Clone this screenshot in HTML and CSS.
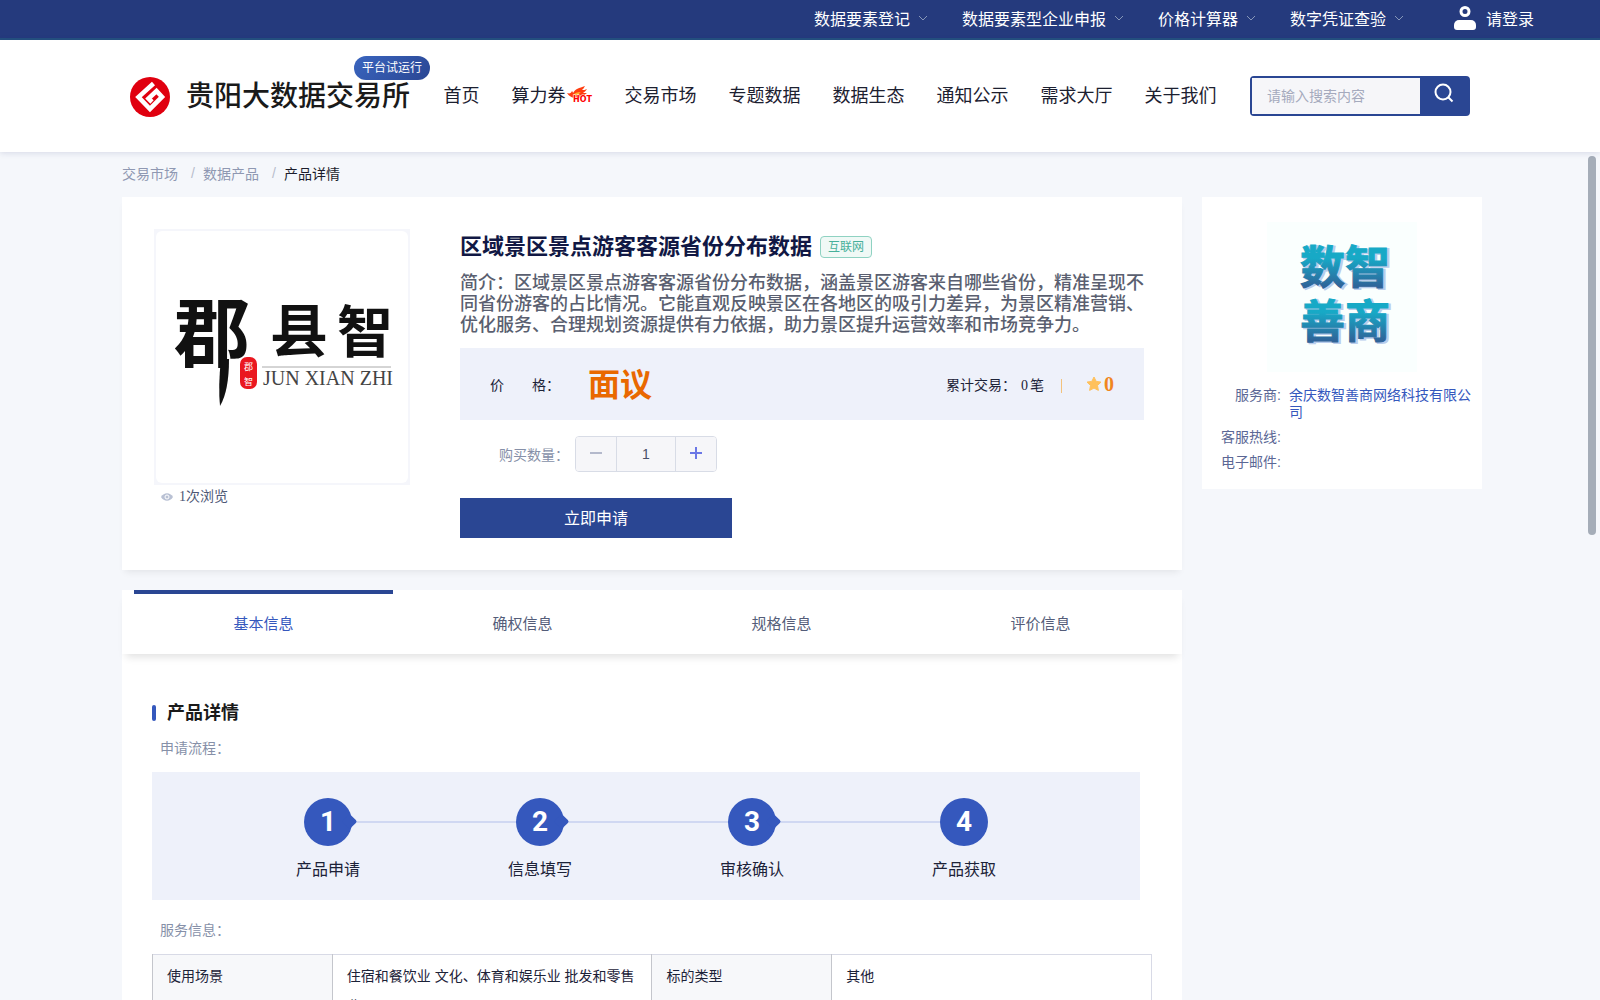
FILE: index.html
```html
<!DOCTYPE html>
<html lang="zh-CN">
<head>
    <meta charset="UTF-8">
    <meta name="viewport" content="width=device-width, initial-scale=1.0">
    <title>产品详情</title>
    <link rel="stylesheet" href="styles.css">
</head>
<body>
    <!-- Top bar -->
    <div class="topbar">
        <a class="top-link" href="#">数据要素登记<svg class="chevron" viewBox="0 0 10 6"><path d="M1 1l4 4 4-4"/></svg></a>
        <a class="top-link" href="#">数据要素型企业申报<svg class="chevron" viewBox="0 0 10 6"><path d="M1 1l4 4 4-4"/></svg></a>
        <a class="top-link" href="#">价格计算器<svg class="chevron" viewBox="0 0 10 6"><path d="M1 1l4 4 4-4"/></svg></a>
        <a class="top-link" href="#">数字凭证查验<svg class="chevron" viewBox="0 0 10 6"><path d="M1 1l4 4 4-4"/></svg></a>
        <a class="login" href="#">
            <svg class="user-icon" viewBox="0 0 22 24">
                <circle cx="11" cy="5.5" r="4" fill="none" stroke="#fff" stroke-width="3"/>
                <path d="M5 14h12a5 5 0 0 1 5 5v2a3 3 0 0 1-3 3H3a3 3 0 0 1-3-3v-2a5 5 0 0 1 5-5z" fill="#fff"/>
            </svg>
            请登录
        </a>
    </div>

    <!-- Header -->
    <header class="header">
        <a class="brand" href="#">
            <svg class="brand-mark" viewBox="0 0 40 40">
                <circle cx="20" cy="20" r="20" fill="#e0000f"/>
                <path d="M23.5 6.500L8.500 20 20 32 32 20 26.500 14 18.500 21.500 22 25" fill="none" stroke="#fff" stroke-width="4.600"/>
            </svg>
            <span class="brand-name">贵阳大数据交易所</span>
            <span class="trial-badge">平台试运行</span>
        </a>
        <nav class="nav">
            <a href="#">首页</a>
            <a class="nav-hot" href="#">算力券
                <svg class="hot-icon" viewBox="0 0 26 18">
                    <path d="M0 8c3 1 4 0 5-2 1 1 1 2 1 2 2-4 6-5 12-7-1 2-2 3-3 4 2 0 3 0 5-1-1 2-3 3-4 4h4c-3 2-5 4-8 5H7C4 12 2 11 0 8z" fill="#ff3d10"/>
                    <path d="M6 10c2-2 4-3 8-3-2 1-2 2-2 3H8z" fill="#ffb02e"/>
                    <text x="6" y="17">HOT</text>
                </svg>
            </a>
            <a href="#">交易市场</a>
            <a href="#">专题数据</a>
            <a href="#">数据生态</a>
            <a href="#">通知公示</a>
            <a href="#">需求大厅</a>
            <a href="#">关于我们</a>
        </nav>
        <form class="search">
            <input type="text" placeholder="请输入搜索内容" aria-label="搜索">
            <button type="button" aria-label="搜索按钮">
                <svg viewBox="0 0 20 20"><circle cx="9" cy="9" r="7.500"/><path d="M14.500 14.500l4 4"/></svg>
            </button>
        </form>
    </header>

    <div class="page">
        <nav class="breadcrumb">
            <a href="#">交易市场</a><span class="sep">/</span>
            <a href="#">数据产品</a><span class="sep">/</span>
            <span class="current">产品详情</span>
        </nav>

        <div class="layout">
            <main class="main">
                <!-- Product summary -->
                <section class="card product">
                    <div class="cover-col">
                        <div class="cover">
                            <svg viewBox="0 0 252 252" role="img" aria-label="郡县智">
                                <text class="brush" x="18" y="130" font-size="76">郡</text>
                                <path d="M65 128h8q0 32-9 47-2-20 1-47z" fill="#111"/>
                                <text class="brush" x="114" y="121" font-size="58">县</text>
                                <text class="brush" x="181" y="121" font-size="56">智</text>
                                <rect x="84" y="126" width="17" height="32" rx="7" fill="#ea1820"/>
                                <text class="seal" x="88" y="139">郡</text>
                                <text class="seal" x="88" y="154">智</text>
                                <path d="M106 136h129" stroke="#aaa"/>
                                <text class="pinyin" x="107" y="154">JUN XIAN ZHI</text>
                            </svg>
                        </div>
                        <div class="views">
                            <svg viewBox="0 0 12 8"><path d="M0 4c3-5 9-5 12 0-3 5-9 5-12 0z" fill="#b9c1d4"/><circle cx="6" cy="4" r="2" fill="none" stroke="#fff"/></svg>
                            1次浏览
                        </div>
                    </div>
                    <div class="info">
                        <div class="title-row">
                            <h1>区域景区景点游客客源省份分布数据</h1>
                            <span class="tag">互联网</span>
                        </div>
                        <p class="desc">简介：区域景区景点游客客源省份分布数据，涵盖景区游客来自哪些省份，精准呈现不同省份游客的占比情况。它能直观反映景区在各地区的吸引力差异，为景区精准营销、优化服务、合理规划资源提供有力依据，助力景区提升运营效率和市场竞争力。</p>
                        <div class="price-box">
                            <span class="price-label"><span>价</span><span>格：</span></span>
                            <strong class="price">面议</strong>
                            <span class="deals">累计交易：<span class="num">0</span>笔</span>
                            <span class="divider"></span>
                            <span class="stars">
                                <svg viewBox="0 0 16 16"><path d="M8 1l2.200 4.400 4.800.7-3.500 3.400.9 4.900L8 12.100l-4.400 2.300.9-4.900L1 6.100l4.800-.7z" fill="#ffc15c" stroke="#ffc15c" stroke-linejoin="round"/></svg>0
                            </span>
                        </div>
                        <div class="quantity">
                            <label for="qty">购买数量：</label>
                            <div class="stepper">
                                <button type="button" class="minus" aria-label="减少"><svg viewBox="0 0 12 12"><path d="M0 6h12"/></svg></button>
                                <input id="qty" type="text" value="1">
                                <button type="button" class="plus" aria-label="增加"><svg viewBox="0 0 12 12"><path d="M0 6h12M6 0v12"/></svg></button>
                            </div>
                        </div>
                        <button type="button" class="apply">立即申请</button>
                    </div>
                </section>

                <!-- Tabs -->
                <div class="tabs">
                    <button type="button" class="tab active">基本信息</button>
                    <button type="button" class="tab">确权信息</button>
                    <button type="button" class="tab">规格信息</button>
                    <button type="button" class="tab">评价信息</button>
                </div>

                <!-- Details -->
                <section class="details">
                    <h2>产品详情</h2>
                    <p class="sub">申请流程：</p>
                    <ol class="steps">
                        <li><span class="circle">1</span><span class="step-name">产品申请</span></li>
                        <li><span class="circle">2</span><span class="step-name">信息填写</span></li>
                        <li><span class="circle">3</span><span class="step-name">审核确认</span></li>
                        <li><span class="circle">4</span><span class="step-name">产品获取</span></li>
                    </ol>
                    <p class="sub">服务信息：</p>
                    <table class="service">
                        <tr>
                            <th>使用场景</th>
                            <td>住宿和餐饮业 文化、体育和娱乐业 批发和零售业</td>
                            <th>标的类型</th>
                            <td>其他</td>
                        </tr>
                    </table>
                </section>
            </main>

            <!-- Provider -->
            <aside class="provider">
                <svg class="provider-logo" viewBox="0 0 150 150" role="img" aria-label="数智善商">
                    <defs>
                        <linearGradient id="teal" x1="0" y1="0" x2="0" y2="1">
                            <stop offset="0.300" stop-color="#17a9c6"/>
                            <stop offset="0.850" stop-color="#2f6499"/>
                        </linearGradient>
                    </defs>
                    <rect width="150" height="150" fill="#fafffe"/>
                    <g class="logo-shadow"><text x="35" y="63">数智</text><text x="35" y="117">善商</text></g>
                    <g class="logo-text"><text x="33" y="62">数智</text><text x="33" y="116">善商</text></g>
                </svg>
                <dl>
                    <dt>服务商:</dt><dd><a href="#">余庆数智善商网络科技有限公司</a></dd>
                    <dt>客服热线:</dt><dd></dd>
                    <dt>电子邮件:</dt><dd></dd>
                </dl>
            </aside>
        </div>
        <div class="scroll-thumb"></div>
    </div>
</body>
</html>
```
FILE: styles.css
```css
* {
    box-sizing: border-box;
}

body {
    margin: 0;
    height: 100vh;
    display: flex;
    flex-direction: column;
    overflow: hidden;
    font-family: "Liberation Sans", "Noto Sans CJK SC", sans-serif;
    font-size: 14px;
    color: #1c2238;
    background: #f5f7fb;
}

a {
    color: inherit;
    text-decoration: none;
}

button,
input {
    font: inherit;
    border: 0;
    padding: 0;
}

h1,
h2,
p,
dl,
dd,
ol {
    margin: 0;
    padding: 0;
}

/* Top bar */
.topbar {
    flex: none;
    height: 40px;
    padding: 0 66px 2px 0;
    display: flex;
    justify-content: flex-end;
    align-items: center;
    gap: 34px;
    background: #253a7d;
    border-bottom: 2px solid #24507f;
    color: #fff;
    font-size: 16px;
}

.top-link,
.login {
    display: flex;
    align-items: center;
    gap: 8px;
}

.login {
    gap: 10px;
    margin-left: 16px;
}

.chevron {
    width: 10px;
    height: 6px;
    fill: none;
    stroke: #8797b8;
}

.user-icon {
    width: 22px;
    height: 24px;
}

/* Header */
.header {
    flex: none;
    height: 112px;
    padding: 0 130px;
    display: flex;
    align-items: center;
    justify-content: space-between;
    background: #fff;
    box-shadow: 0 1px 6px rgba(40, 50, 110, 0.15);
    z-index: 1;
}

.brand {
    position: relative;
    display: flex;
    align-items: center;
    gap: 16px;
    padding-top: 2px;
}

.brand-mark {
    width: 40px;
    height: 40px;
}

.brand-name {
    font-size: 28px;
    line-height: 40px;
    font-weight: 500;
    color: #1a1a1a;
}

.trial-badge {
    position: absolute;
    right: -20px;
    top: -19px;
    width: 76px;
    line-height: 24px;
    text-align: center;
    font-size: 12px;
    color: #fff;
    border-radius: 12px;
    background: linear-gradient(135deg, #3a65bf, #2a4693);
}

.nav {
    display: flex;
    gap: 32px;
    padding-bottom: 4px;
    font-size: 18px;
    color: #1c2030;
}

.nav-hot {
    display: flex;
    align-items: center;
    gap: 1px;
}

.hot-icon {
    width: 26px;
    height: 18px;
}

.hot-icon text {
    font: bold 8px "DejaVu Sans", sans-serif;
    fill: #f00;
    stroke: #fff;
    stroke-width: 1;
    paint-order: stroke;
}

.search {
    width: 220px;
    height: 40px;
    display: flex;
    border: 2px solid #2a4693;
    border-radius: 4px;
    background: #2a4693;
}

.search input {
    flex: 1;
    min-width: 0;
    padding: 0 15px;
    background: #f6f6f9;
}

.search input::placeholder {
    color: #a5aabd;
}

.search button {
    width: 48px;
    padding-bottom: 4px;
    background: #2a4693;
}

.search svg {
    width: 20px;
    height: 20px;
    fill: none;
    stroke: #fff;
    stroke-width: 2;
}

/* Page */
.page {
    position: relative;
    flex: 1;
    min-height: 0;
    overflow: hidden;
    padding: 0 118px 0 122px;
}

.breadcrumb {
    height: 45px;
    padding-bottom: 4px;
    display: flex;
    align-items: center;
    color: #8f98b2;
}

.breadcrumb .sep {
    width: 25px;
    padding-left: 13px;
    color: #b8bdcc;
}

.breadcrumb .current {
    color: #1c1d2c;
}

.layout {
    display: grid;
    grid-template-columns: 1fr 280px;
    gap: 20px;
    align-items: start;
}

.product {
    display: flex;
    gap: 50px;
    padding: 32px 38px 32px 32px;
    background: #fff;
    box-shadow: 0 5px 7px -3px rgba(0, 0, 0, 0.08);
}

.cover {
    width: 256px;
    height: 256px;
    padding: 2px;
    background: #f5f6fb;
}

.cover svg {
    display: block;
    border-radius: 6px;
    background: #fff;
}

.brush {
    font-weight: 700;
    fill: #111;
}

.seal {
    font-size: 9px;
    fill: #fff;
}

.pinyin {
    font-family: "Liberation Serif", serif;
    font-size: 20px;
    fill: #444;
}

.views {
    display: flex;
    align-items: center;
    gap: 6px;
    padding-left: 7px;
    line-height: 23px;
    color: #4e5876;
    font-family: "Liberation Serif", "Noto Sans CJK SC", serif;
}

.views svg {
    width: 12px;
    height: 8px;
}

.info {
    flex: 1;
}

.title-row {
    display: flex;
    align-items: center;
    gap: 8px;
    height: 36px;
}

.title-row h1 {
    font-size: 22px;
    line-height: 36px;
    color: #111844;
}

.tag {
    padding: 0 7px;
    line-height: 20px;
    font-size: 12px;
    color: #46b09a;
    background: #f0f9f6;
    border: 1px solid #8fd2c2;
    border-radius: 4px;
}

.desc {
    margin: 8px 0 12px;
    font-size: 18px;
    line-height: 21px;
    font-weight: 500;
    color: #5a5f70;
}

.price-box {
    display: flex;
    align-items: center;
    height: 72px;
    padding: 0 30px;
    background: #eef1fa;
}

.price-label {
    width: 98px;
    display: flex;
    gap: 28px;
}

.price {
    padding-bottom: 5px;
    font-size: 32px;
    color: #e96800;
}

.deals {
    margin-left: auto;
}

.num,
.stars {
    font-family: "Liberation Serif", serif;
}

.num {
    margin: 0 2px 0 5px;
}

.divider {
    width: 1px;
    height: 14px;
    margin: 4px 24px 0 17px;
    background: #f3c27c;
}

.stars {
    display: flex;
    align-items: center;
    gap: 2px;
    font-size: 20px;
    font-weight: 700;
    color: #f0861f;
}

.stars svg {
    width: 16px;
    height: 16px;
}

.quantity {
    display: flex;
    align-items: center;
    gap: 6px;
    margin: 16px 0 26px;
    padding-left: 39px;
    color: #8690a8;
}

.stepper {
    display: flex;
    width: 142px;
    height: 36px;
    border: 1px solid #d8dce6;
    border-radius: 4px;
    overflow: hidden;
}

.stepper button,
.stepper input {
    background: #f6f6f9;
}

.stepper button {
    width: 40px;
}

.stepper input {
    flex: 1;
    min-width: 0;
    text-align: center;
    color: #4a5068;
    border: solid #d8dce6;
    border-width: 0 1px;
}

.stepper svg {
    width: 12px;
    height: 12px;
    stroke: #b4b9cc;
    stroke-width: 2;
}

.stepper .plus svg {
    stroke: #6b77e6;
}

.apply {
    display: block;
    width: 272px;
    height: 40px;
    padding-bottom: 2px;
    font-size: 16px;
    color: #fff;
    background: #2a4693;
}

/* Tabs */
.tabs {
    position: relative;
    display: flex;
    height: 64px;
    margin-top: 20px;
    padding: 0 12px;
    background: #fff;
    box-shadow: 0 7px 8px -4px rgba(0, 0, 0, 0.12);
}

.tab {
    flex: 1;
    padding-bottom: 4px;
    font-size: 15px;
    color: #545d79;
    background: none;
    border-top: 4px solid transparent;
}

.tab.active {
    color: #3558bd;
    border-top-color: #2a4693;
}

/* Details */
.details {
    padding: 44px 30px 30px;
    background: #fff;
}

.details h2 {
    display: flex;
    align-items: center;
    gap: 11px;
    font-size: 18px;
    line-height: 30px;
    color: #1a1a1a;
}

.details h2::before {
    content: "";
    width: 4px;
    height: 16px;
    border-radius: 2px;
    background: #3558bd;
}

.sub {
    padding: 8px 8px 12px;
    line-height: 24px;
    color: #8690a8;
}

.steps {
    display: flex;
    height: 128px;
    margin: 0 12px 10px 0;
    padding: 26px 70px;
    list-style: none;
    background: #eef1fa;
}

.steps li {
    position: relative;
    flex: 1;
    display: flex;
    flex-direction: column;
    align-items: center;
    gap: 14px;
}

/* connector to the next step */
.steps li:not(:last-child)::before {
    content: "";
    position: absolute;
    top: 23px;
    left: 50%;
    width: 100%;
    height: 2px;
    background: #d0d8f2;
}

.circle {
    position: relative;
    width: 48px;
    height: 48px;
    border-radius: 50%;
    background: #3558bd;
    color: #fff;
    font: 700 28px/48px Roboto, sans-serif;
    text-align: center;
    z-index: 1;
}

li:not(:last-child) .circle::after {
    content: "";
    position: absolute;
    left: 40px;
    top: 18px;
    width: 11px;
    height: 11px;
    border-radius: 2px;
    background: #3558bd;
    transform: rotate(45deg);
}

.step-name {
    font-size: 16px;
    line-height: 20px;
}

.service {
    width: 100%;
    table-layout: fixed;
    border-collapse: collapse;
    border: 1px solid #d8dae6;
}

.service th,
.service td {
    padding: 6px 14px;
    vertical-align: top;
    text-align: left;
    font-weight: 400;
    line-height: 30px;
    border-left: 1px solid #c4c6cc;
    width: 32%;
}

.service th {
    width: 18%;
    background: #f7f8fa;
}

/* Provider */
.provider {
    padding: 25px 10px 18px 18px;
    background: #fff;
}

.provider-logo {
    display: block;
    width: 150px;
    margin: 0 auto 15px 47px;
}

.provider-logo text {
    font-size: 45px;
    font-weight: 700;
}

.logo-shadow {
    fill: #b9cdec;
    stroke: #b9cdec;
    stroke-width: 2;
}

.logo-text {
    fill: url(#teal);
    stroke: url(#teal);
    stroke-width: 1;
}

.provider dl {
    display: grid;
    grid-template-columns: 61px 1fr;
    gap: 8px;
    line-height: 17px;
    color: #5b6795;
}

.provider dt {
    text-align: right;
    white-space: nowrap;
}

.provider a {
    color: #3558bd;
}

.scroll-thumb {
    position: absolute;
    top: 4px;
    right: 4px;
    width: 8px;
    height: 379px;
    border-radius: 4px;
    background: #a5adb8;
}
```
